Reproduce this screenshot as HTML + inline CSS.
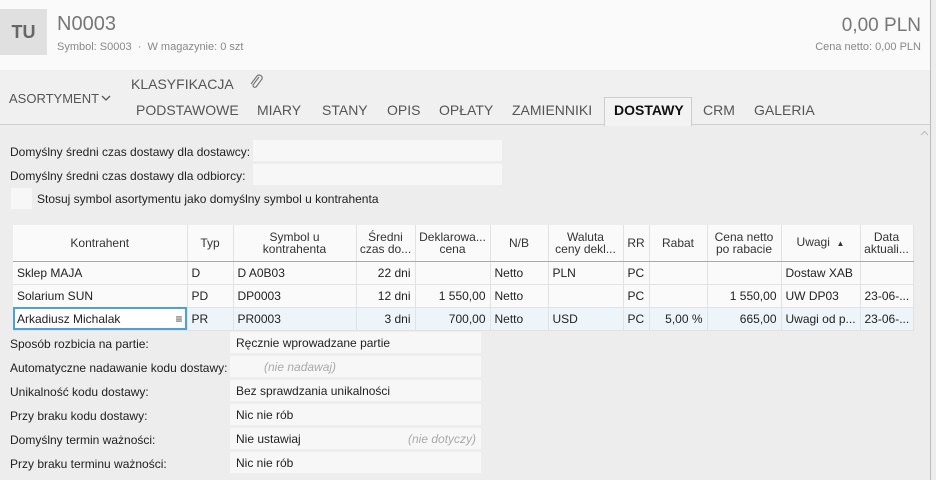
<!DOCTYPE html>
<html><head><meta charset="utf-8"><style>
*{margin:0;padding:0;box-sizing:border-box}
body{width:936px;height:480px;overflow:hidden;background:#ededed;font-family:"Liberation Sans",sans-serif;font-size:12px;color:#222;position:relative}
.a{position:absolute;white-space:nowrap}
#hdr{left:0;top:0;width:930px;height:70px;background:#fafafa}
#tabs{left:0;top:70px;width:930px;height:55px;background:#f0f0f0;border-bottom:1px solid #d0d0d0}
.tab{position:absolute;top:102px;font-size:14px;color:#555}
.inp{position:absolute;background:#f7f7f7}
table{position:absolute;left:13px;top:225px;border-collapse:collapse;table-layout:fixed;width:900px;background:#fafafa}
td{border-right:1px solid #e2e2e2;border-bottom:1px solid #e2e2e2;height:23px;padding:0 4px;white-space:nowrap;overflow:hidden}
th{font-weight:normal;height:36px;border-right:1px solid #e2e2e2;border-bottom:1px solid #aaa;line-height:12px;padding:0 2px;background:#fafafa;color:#333}
.r{text-align:right}
tr.sel td{background:#eef5fa}
.lbl{position:absolute;left:10px}
.val{position:absolute;left:230px;width:251px;height:21px;background:#f7f7f7;padding:4px 6px}
</style></head><body>
<div class="a" id="hdr"></div>
<div class="a" style="left:0;top:9px;width:47px;height:46px;background:#e0e0e0;color:#666;font-size:18px;font-weight:bold;text-align:center;line-height:46px">TU</div>
<div class="a" style="left:57px;top:13px;font-size:20px;color:#777">N0003</div>
<div class="a" style="left:57px;top:41px;font-size:11px;color:#888">Symbol: S0003 &nbsp;·&nbsp; W magazynie: 0 szt</div>
<div class="a" style="right:15px;top:15px;font-size:19px;color:#777">0,00 PLN</div>
<div class="a" style="right:15px;top:41px;font-size:11px;color:#888">Cena netto: 0,00 PLN</div>
<div class="a" style="left:930px;top:0;width:1px;height:480px;background:#bbb"></div>
<div class="a" id="tabs"></div>
<div class="a" style="left:9px;top:91px;font-size:13px;color:#555">ASORTYMENT</div>
<svg class="a" style="left:100px;top:93px" width="12" height="10" viewBox="0 0 12 10"><path d="M2 3 L6 7 L10 3" fill="none" stroke="#555" stroke-width="1.3"/></svg>
<div class="a" style="left:131px;top:76px;font-size:14px;color:#555">KLASYFIKACJA</div>
<svg class="a" style="left:248px;top:74px" width="16" height="16" viewBox="0 0 16 16"><path d="M11 3 L5 11 a2 2 0 0 0 3 2 L14 5 a3 3 0 0 0-5-3 L3 10" fill="none" stroke="#777" stroke-width="1.2"/></svg>
<div class="a" style="left:604px;top:97px;width:88px;height:29px;background:#f3f3f3;border:1px solid #ccc;border-bottom:none"></div>
<div class="tab" style="left:136px">PODSTAWOWE</div>
<div class="tab" style="left:257px">MIARY</div>
<div class="tab" style="left:322px">STANY</div>
<div class="tab" style="left:387px">OPIS</div>
<div class="tab" style="left:439px">OPŁATY</div>
<div class="tab" style="left:512px">ZAMIENNIKI</div>
<div class="tab" style="left:614px;color:#111;font-weight:bold">DOSTAWY</div>
<div class="tab" style="left:703px">CRM</div>
<div class="tab" style="left:754px">GALERIA</div>
<svg class="a" style="left:920px;top:130px" width="9" height="6" viewBox="0 0 9 6"><path d="M1 5 L4.5 1.5 L8 5" fill="none" stroke="#bbb" stroke-width="1"/></svg>
<div class="lbl" style="top:145px">Domyślny średni czas dostawy dla dostawcy:</div>
<div class="inp" style="left:253px;top:140px;width:249px;height:21px"></div>
<div class="lbl" style="top:169px">Domyślny średni czas dostawy dla odbiorcy:</div>
<div class="inp" style="left:253px;top:164px;width:249px;height:21px"></div>
<div class="inp" style="left:11px;top:188px;width:21px;height:21px"></div>
<div class="a" style="left:37px;top:192px">Stosuj symbol asortymentu jako domyślny symbol u kontrahenta</div>
<table>
<colgroup><col style="width:174px"><col style="width:46px"><col style="width:123px"><col style="width:59px"><col style="width:75px"><col style="width:58px"><col style="width:75px"><col style="width:26px"><col style="width:58px"><col style="width:74px"><col style="width:79px"><col style="width:53px"></colgroup>
<tr><th>Kontrahent</th><th>Typ</th><th>Symbol u<br>kontrahenta</th><th>Średni<br>czas do...</th><th>Deklarowa...<br>cena</th><th>N/B</th><th>Waluta<br>ceny dekl...</th><th>RR</th><th>Rabat</th><th>Cena netto<br>po rabacie</th><th>Uwagi &nbsp;<span style="font-size:8px">▲</span></th><th>Data<br>aktuali...</th></tr>
<tr><td>Sklep MAJA</td><td>D</td><td>D A0B03</td><td class="r">22 dni</td><td></td><td>Netto</td><td>PLN</td><td>PC</td><td></td><td></td><td>Dostaw XAB</td><td></td></tr>
<tr><td>Solarium SUN</td><td>PD</td><td>DP0003</td><td class="r">12 dni</td><td class="r">1 550,00</td><td>Netto</td><td></td><td>PC</td><td></td><td class="r">1 550,00</td><td>UW DP03</td><td>23-06-...</td></tr>
<tr class="sel"><td style="outline:2px solid #4aa3d0;outline-offset:-2px;background:#fff">Arkadiusz Michalak<span style="float:right;color:#444">≡</span></td><td>PR</td><td>PR0003</td><td class="r">3 dni</td><td class="r">700,00</td><td>Netto</td><td>USD</td><td>PC</td><td class="r">5,00 %</td><td class="r">665,00</td><td>Uwagi od p...</td><td>23-06-...</td></tr>
</table>
<div class="lbl" style="top:337px">Sposób rozbicia na partie:</div><div class="val" style="top:332px">Ręcznie wprowadzane partie</div>
<div class="lbl" style="top:361px">Automatyczne nadawanie kodu dostawy:</div><div class="val" style="top:356px;color:#aaa;font-style:italic;padding-left:34px">(nie nadawaj)</div>
<div class="lbl" style="top:385px">Unikalność kodu dostawy:</div><div class="val" style="top:380px">Bez sprawdzania unikalności</div>
<div class="lbl" style="top:409px">Przy braku kodu dostawy:</div><div class="val" style="top:404px">Nic nie rób</div>
<div class="lbl" style="top:433px">Domyślny termin ważności:</div><div class="val" style="top:428px">Nie ustawiaj<span style="position:absolute;left:178px;color:#aaa;font-style:italic">(nie dotyczy)</span></div>
<div class="lbl" style="top:457px">Przy braku terminu ważności:</div><div class="val" style="top:452px">Nic nie rób</div>
</body></html>
